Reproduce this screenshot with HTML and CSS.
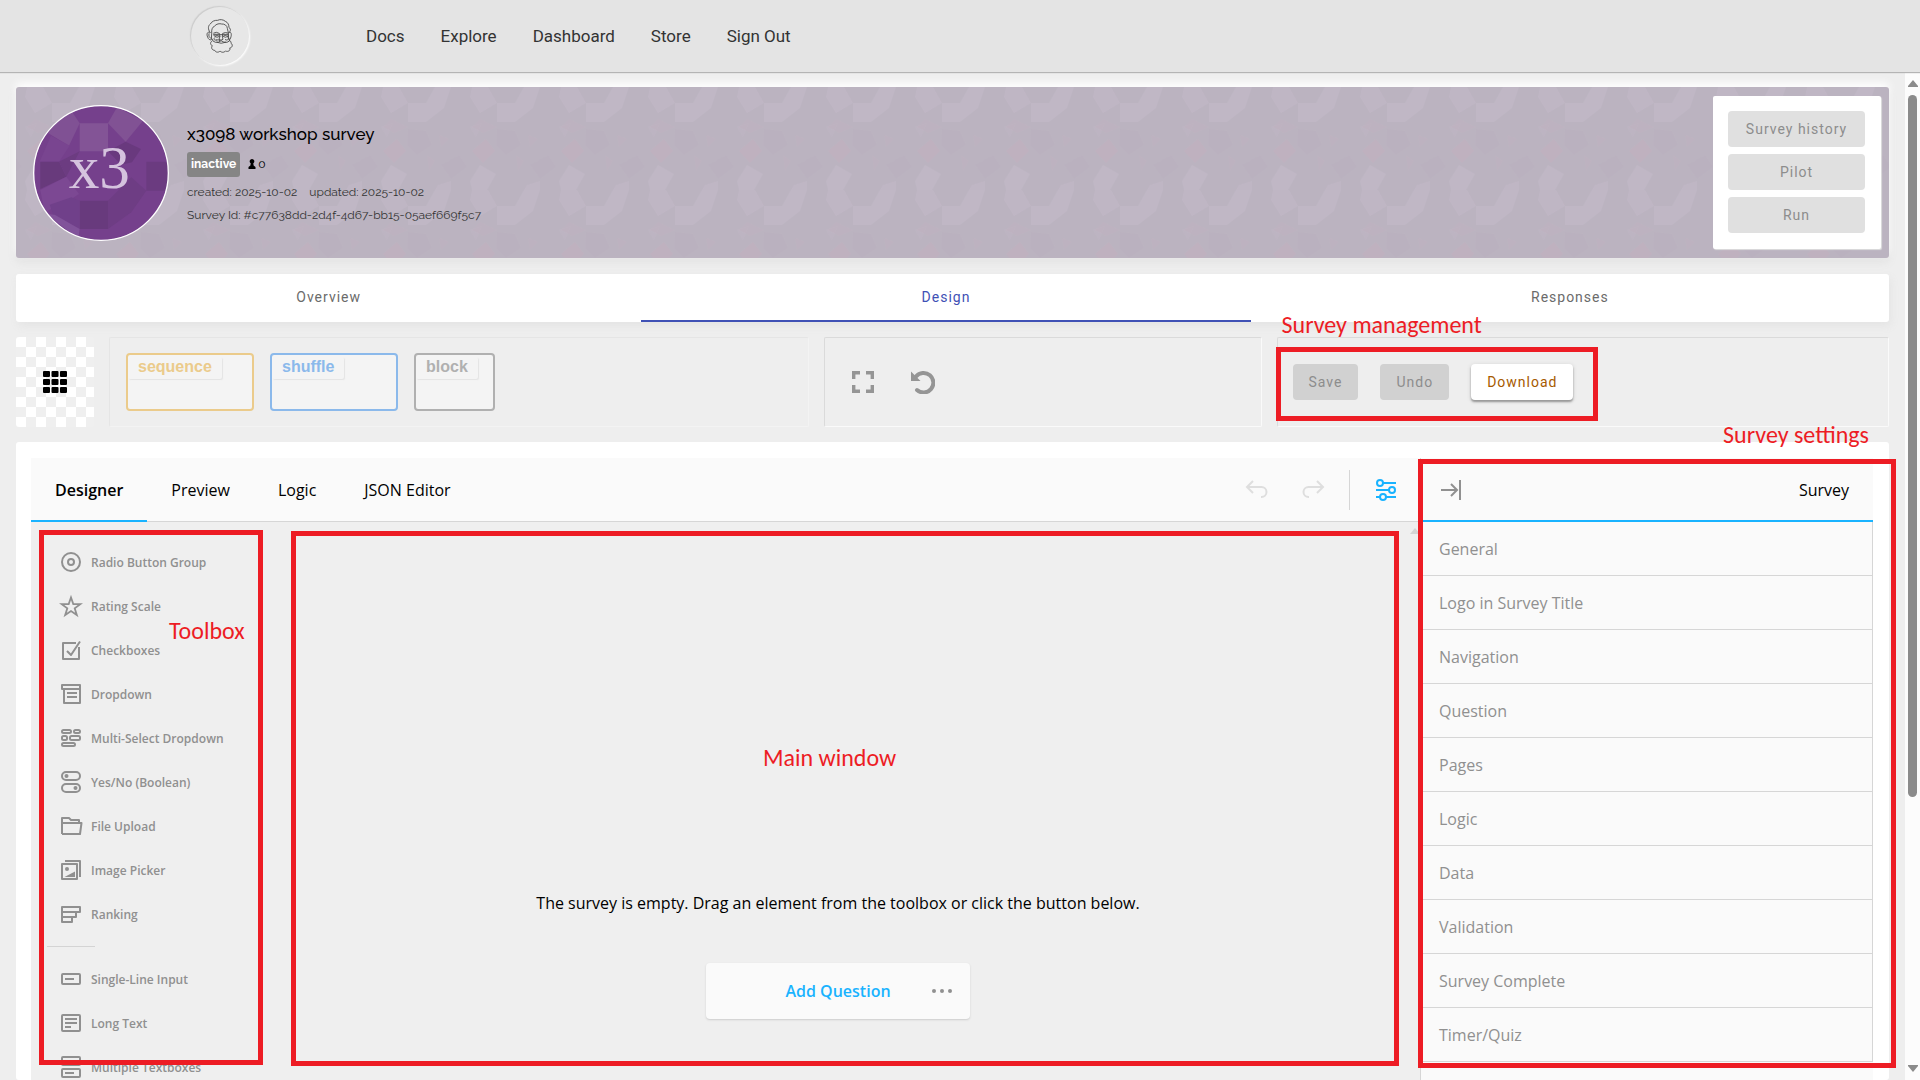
FILE: index.html
```html
<!DOCTYPE html>
<html lang="en">
<head>
<meta charset="utf-8">
<meta name="viewport" content="width=device-width, initial-scale=1">
<title>x3098 workshop survey</title>
<link rel="stylesheet" href="styles.css">
</head>
<body>
<header class="site-header">
  <a class="logo" href="#" aria-label="Home">
    <svg viewBox="34 20 174 174" fill="none" stroke="#444" stroke-width="2.6" stroke-linejoin="round" stroke-linecap="round">
      <path d="M91 96 C84 86 85 76 92 71 C96 63 106 59 114 60 C120 56 132 58 137 63 C145 66 148 74 148 82 C155 86 152 92 149 96"/>
      <path d="M96 98 C95 88 98 80 104 78 C110 70 120 69 126 71 C134 70 143 76 143 84 L146 97"/>
      <path d="M91 96 C82 92 80 103 84 110 C86 117 91 120 95 118 L96 100 M88 100 C86 106 89 112 92 113"/>
      <path d="M149 96 C155 93 156 103 154 109 C153 116 149 118 147 117 L146 98"/>
      <path d="M102 98 Q110 93 119 99 M129 99 Q138 94 145 98 M103 102 H120 V108 Q112 114 105 108 Z M129 102 H145 V108 Q137 114 130 108 Z M120 103 H129 M108 105 H116 M133 105 H140" />
      <path d="M121 108 L118 117 Q124 122 130 117 L128 108 M105 112 C100 116 104 121 110 119 M110 119 Q116 116 121 121 M145 112 C150 117 142 122 137 118"/>
      <path d="M97 116 Q99 125 108 126 Q118 127 124 121 Q132 127 142 126 Q151 124 151 116 M112 126 Q124 132 138 126"/>
      <path d="M97 122 C90 126 92 134 98 136 C93 143 98 150 105 150 C109 158 118 156 121 152 C127 158 134 156 137 152 C147 156 153 149 150 143 C159 142 160 132 154 129 C155 124 152 121 150 121"/>
    </svg>
  </a>
  <nav class="site-nav" aria-label="Main">
    <a href="#">Docs</a>
    <a href="#">Explore</a>
    <a href="#">Dashboard</a>
    <a href="#">Store</a>
    <a href="#">Sign Out</a>
  </nav>
</header>

<div class="viewport">
  <main class="page">
    <section class="hero">
      <svg class="hero-pattern" aria-hidden="true">
        <defs>
          <pattern id="gem" x="9" y="0" width="89" height="103" patternUnits="userSpaceOnUse">
            <g fill="#c0b7c5">
              <path d="M2 0 H18 L27 16 L10 26 L0 10 Z" opacity=".8"/>
              <path d="M27 16 H45 V35 H27 Z"/>
              <path d="M45 16 L54 0 H70 L63 21 L45 35 Z"/>
              <path d="M10 78 L26 87 L17 103 H2 L0 94 Z"/>
              <path d="M54 103 L57 98 L70 94 V103 Z" opacity=".8"/>
              <path d="M0 40 L12 36 L6 50 Z" opacity=".4"/>
            </g>
            <g fill="#b9b0be">
              <path d="M27 42 L45 44 L51 58 L36 68 L26 58 Z" opacity=".5"/>
              <path d="M60 78 L78 68 L86 80 L70 92 Z" opacity=".4"/>
            </g>
            <g fill="#bfb1bf">
              <path d="M2 64 L16 52 L25 64 L13 76 Z"/>
              <path d="M10 32 L27 40 L13 46 L2 40 Z" opacity=".5"/>
              <path d="M46 68 L54 74 L48 84 Z" opacity=".5"/>
              <path d="M58 48 L68 52 L60 60 Z" opacity=".5"/>
            </g>
          </pattern>
        </defs>
        <rect width="100%" height="100%" fill="url(#gem)"/>
      </svg>
      <svg class="avatar" viewBox="50 73 408 408" role="img" aria-label="x3">
        <defs><clipPath id="disc"><circle cx="254" cy="277" r="202"/></clipPath></defs>
        <g clip-path="url(#disc)">
          <rect x="50" y="73" width="408" height="408" fill="#75408c"/>
          <path d="M165 90 L190 128 L158 195 L95 157 L140 100Z" fill="#805194"/>
          <path d="M190 128 H275 V212 H190Z" fill="#835496"/>
          <path d="M302 80 L380 120 L328 183 L275 128Z" fill="#815294"/>
          <path d="M104 165 L160 195 L128 243 H70Z" fill="#794590"/>
          <path d="M275 212 L328 183 L374 205 L347 245 L315 252Z" fill="#69397e"/>
          <path d="M72 243 H128 L150 288 L72 325Z" fill="#683a7c"/>
          <path d="M128 243 L190 212 L150 288Z" fill="#6c3c81"/>
          <path d="M72 328 L150 288 L188 340 L165 355 L85 395Z" fill="#7c4893"/>
          <path d="M190 360 H275 V445 H190Z" fill="#683a7d"/>
          <path d="M100 372 L165 350 L190 360 V445 L110 402Z" fill="#70408a"/>
          <path d="M90 400 L115 402 L190 445 L186 475Z" fill="#81539a"/>
          <path d="M390 243 H460 V330 H390Z" fill="#6b3b80"/>
          <path d="M275 360 L345 290 L390 330 L345 395 L275 445Z" fill="#6e3d84"/>
        </g>
        <circle cx="254" cy="277" r="202" fill="none" stroke="#fff" stroke-width="4"/>
        <text class="avatar-text" x="249" y="323" text-anchor="middle">x3</text>
      </svg>
      <div class="survey-info">
        <h1>x3098 workshop survey</h1>
        <p class="status">
          <span class="badge">inactive</span>
          <svg viewBox="0 0 8 10" width="8" height="10" aria-hidden="true"><path d="M4 0a2.300 2.300 0 0 1 1.300 4.200L5.600 6.500 7.500 8V10H.5V8L2.400 6.500 2.700 4.200A2.300 2.300 0 0 1 4 0Z"/></svg>
          <span>0</span>
        </p>
        <p class="meta"><span>created: 2025-10-02</span><span>updated: 2025-10-02</span></p>
        <p class="meta">Survey Id: #c77638dd-2d4f-4d67-bb15-05aef669f5c7</p>
      </div>
      <div class="run-panel">
        <button class="btn" type="button" disabled>Survey history</button>
        <button class="btn" type="button" disabled>Pilot</button>
        <button class="btn" type="button" disabled>Run</button>
      </div>
    </section>

    <nav class="page-tabs" aria-label="Survey">
      <a href="#">Overview</a>
      <a class="active" href="#" aria-current="page">Design</a>
      <a href="#">Responses</a>
    </nav>

    <section class="toolbar">
      <button class="grid-toggle" type="button" aria-label="Grid">
        <svg viewBox="0 0 24 22" width="24" height="22"><path d="M1 0h5a1 1 0 0 1 1 1v4a1 1 0 0 1-1 1H1a1 1 0 0 1-1-1V1a1 1 0 0 1 1-1ZM9.500 0h5a1 1 0 0 1 1 1v4a1 1 0 0 1-1 1h-5a1 1 0 0 1-1-1V1a1 1 0 0 1 1-1ZM18 0h5a1 1 0 0 1 1 1v4a1 1 0 0 1-1 1h-5a1 1 0 0 1-1-1V1a1 1 0 0 1 1-1ZM1 8h5a1 1 0 0 1 1 1v4a1 1 0 0 1-1 1H1a1 1 0 0 1-1-1V9a1 1 0 0 1 1-1ZM9.500 8h5a1 1 0 0 1 1 1v4a1 1 0 0 1-1 1h-5a1 1 0 0 1-1-1V9a1 1 0 0 1 1-1ZM18 8h5a1 1 0 0 1 1 1v4a1 1 0 0 1-1 1h-5a1 1 0 0 1-1-1V9a1 1 0 0 1 1-1ZM1 16h5a1 1 0 0 1 1 1v4a1 1 0 0 1-1 1H1a1 1 0 0 1-1-1v-4a1 1 0 0 1 1-1ZM9.500 16h5a1 1 0 0 1 1 1v4a1 1 0 0 1-1 1h-5a1 1 0 0 1-1-1v-4a1 1 0 0 1 1-1ZM18 16h5a1 1 0 0 1 1 1v4a1 1 0 0 1-1 1h-5a1 1 0 0 1-1-1v-4a1 1 0 0 1 1-1Z"/></svg>
      </button>
      <div class="well well-faint">
        <div class="node node-sequence"><span>sequence</span></div>
        <div class="node node-shuffle"><span>shuffle</span></div>
        <div class="node node-block"><span>block</span></div>
      </div>
      <div class="well well-view">
        <button class="icon-btn" type="button" aria-label="Full screen">
          <svg viewBox="0 0 22 22" width="22" height="22" fill="none" stroke="#959595" stroke-width="3.400"><path d="M1.700 8V1.700H8M14 1.700h6.300V8M20.300 14v6.300H14M8 20.300H1.700V14"/></svg>
        </button>
        <button class="icon-btn" type="button" aria-label="Reset">
          <svg viewBox="0 0 24 24" width="24" height="24"><path d="M5 6.500A9.800 9.800 0 1 1 6 20" fill="none" stroke="#959595" stroke-width="4" stroke-linecap="round"/><path d="M0 1.500V11H9.500Z" fill="#959595"/></svg>
        </button>
      </div>
      <div class="well well-actions">
        <button class="btn btn-muted" type="button" disabled>Save</button>
        <button class="btn btn-muted" type="button" disabled>Undo</button>
        <button class="btn btn-raised" type="button">Download</button>
        <div class="mark mark-management"></div>
        <span class="note note-management">Survey management</span>
      </div>
    </section>

    <section class="creator">
      <div class="workspace">
        <div class="creator-bar">
          <nav class="creator-tabs" aria-label="Creator">
            <a class="active" href="#" aria-current="page">Designer</a>
            <a href="#">Preview</a>
            <a href="#">Logic</a>
            <a href="#">JSON Editor</a>
          </nav>
          <div class="creator-actions">
            <button class="icon-btn" type="button" aria-label="Undo" disabled>
              <svg viewBox="0 0 24 24" width="24" height="24" fill="none" stroke="#dedede" stroke-width="2"><path d="M8 3L2 9l6 6M2 9h14.500a5 5 0 0 1 0 10H16"/></svg>
            </button>
            <button class="icon-btn" type="button" aria-label="Redo" disabled>
              <svg viewBox="0 0 24 24" width="24" height="24" fill="none" stroke="#dedede" stroke-width="2"><path d="M16 3l6 6-6 6M22 9H7.500a5 5 0 0 0 0 10H8"/></svg>
            </button>
            <span class="divider"></span>
            <button class="icon-btn" type="button" aria-label="Settings">
              <svg viewBox="0 0 24 24" width="24" height="24" fill="none" stroke="#19b3ff" stroke-width="2"><circle cx="6" cy="5" r="3"/><path d="M9 5h13M2 12h13"/><circle cx="18" cy="12" r="3"/><path d="M2 19h4M12 19h10"/><circle cx="9" cy="19" r="3"/></svg>
            </button>
          </div>
        </div>
        <div class="work-body">
          <aside class="toolbox">
            <ul>
              <li><button type="button"><svg viewBox="0 0 24 24"><circle cx="12" cy="12" r="9"/><circle cx="12" cy="12" r="3"/></svg>Radio Button Group</button></li>
              <li><button type="button"><svg viewBox="0 0 24 24"><path d="M12 3.500l2.300 6.600h7l-5.600 4.200 2.100 6.800L12 17l-5.800 4.100 2.100-6.800L2.700 10.100h7Z" stroke-width="1.800" stroke-linejoin="miter"/></svg>Rating Scale</button></li>
              <li><button type="button"><svg viewBox="0 0 24 24"><path d="M17 5H4v16h16V9M8 13l4 4L21 3.500"/></svg>Checkboxes</button></li>
              <li><button type="button"><svg viewBox="0 0 24 24"><path d="M3 3h18v4H3ZM5 7v14h16V7M8 11h10M8 15h10"/></svg>Dropdown</button></li>
              <li><button type="button"><svg viewBox="0 0 24 24"><rect x="3" y="4" width="9" height="3" rx="1.500"/><rect x="15" y="4" width="6" height="3" rx="1.500"/><rect x="3" y="10" width="5" height="4" rx="1.500"/><rect x="11" y="10" width="10" height="4" rx="1.500"/><rect x="3" y="17" width="13" height="3" rx="1.500"/></svg>Multi-Select Dropdown</button></li>
              <li><button type="button"><svg viewBox="0 0 24 24"><rect x="3" y="2" width="18" height="8" rx="4"/><rect x="3" y="14" width="18" height="8" rx="4"/><circle class="dot" cx="7.500" cy="6" r="2"/><circle class="dot" cx="16.500" cy="18" r="2"/></svg>Yes/No (Boolean)</button></li>
              <li><button type="button"><svg viewBox="0 0 24 24"><path d="M3 20V4h7l2 2h8v3M3 20h18l1.500-11H3"/></svg>File Upload</button></li>
              <li><button type="button"><svg viewBox="0 0 24 24"><path d="M6 3h15v16M3 6h15v15H3Z"/><circle class="dot" cx="8" cy="11" r="2"/><path class="dot" d="M5.500 19L16 13.500V19Z"/></svg>Image Picker</button></li>
              <li><button type="button"><svg viewBox="0 0 24 24"><path d="M3 5h18v5H3ZM3 10h14v5H3ZM3 15h10v5H3Z"/></svg>Ranking</button></li>
              <li class="separator" role="separator"></li>
              <li><button type="button"><svg viewBox="0 0 24 24"><rect x="3" y="7" width="18" height="10" rx="1"/><path d="M6 12h9"/></svg>Single-Line Input</button></li>
              <li><button type="button"><svg viewBox="0 0 24 24"><rect x="3" y="4" width="18" height="16" rx="1"/><path d="M6 8h12M6 12h12M6 16h6"/></svg>Long Text</button></li>
              <li><button type="button"><svg viewBox="0 0 24 24"><rect x="3" y="2" width="18" height="8" rx="1"/><rect x="3" y="14" width="18" height="8" rx="1"/><path d="M6 6h9M6 18h9"/></svg>Multiple Textboxes</button></li>
            </ul>
            <div class="mark mark-toolbox"></div>
            <span class="note note-toolbox">Toolbox</span>
          </aside>
          <div class="canvas">
            <p>The survey is empty. Drag an element from the toolbox or click the button below.</p>
            <div class="add-question">
              <button class="add-main" type="button">Add Question</button>
              <button class="add-more" type="button" aria-label="Question type"><svg viewBox="0 0 20 4" width="20" height="4" fill="#909090"><circle cx="2" cy="2" r="2"/><circle cx="10" cy="2" r="2"/><circle cx="18" cy="2" r="2"/></svg></button>
            </div>
            <svg class="canvas-arrow" viewBox="0 0 10 6" width="10" height="6" fill="#d4d4d4" aria-hidden="true"><path d="M5 0L10 6H0Z"/></svg>
            <div class="mark mark-canvas"></div>
            <span class="note note-canvas">Main window</span>
          </div>
        </div>
      </div>
      <aside class="settings">
        <div class="settings-head">
          <button class="icon-btn" type="button" aria-label="Collapse">
            <svg viewBox="0 0 24 24" width="24" height="24" fill="none" stroke="#909090" stroke-width="2"><path d="M2 12h16M12 6l6 6-6 6M21 2v20"/></svg>
          </button>
          <h2>Survey</h2>
        </div>
        <ul>
          <li><a href="#">General</a></li>
          <li><a href="#">Logo in Survey Title</a></li>
          <li><a href="#">Navigation</a></li>
          <li><a href="#">Question</a></li>
          <li><a href="#">Pages</a></li>
          <li><a href="#">Logic</a></li>
          <li><a href="#">Data</a></li>
          <li><a href="#">Validation</a></li>
          <li><a href="#">Survey Complete</a></li>
          <li><a href="#">Timer/Quiz</a></li>
        </ul>
        <div class="mark mark-settings"></div>
        <span class="note note-settings">Survey settings</span>
      </aside>
    </section>
  </main>
  <div class="scrollbar" aria-hidden="true">
    <svg viewBox="0 0 10 7" width="10" height="7" fill="#8b8b8b"><path d="M5 0L10 6V7H0V6Z"/></svg>
    <div class="track"><div class="thumb"></div></div>
    <svg viewBox="0 0 10 7" width="10" height="7" fill="#8b8b8b"><path d="M5 7L0 1V0H10V1Z"/></svg>
  </div>
</div>
</body>
</html>
```
FILE: styles.css
```css
* { box-sizing: border-box; }

body {
  margin: 0;
  height: 100vh;
  display: flex;
  flex-direction: column;
  overflow: hidden;
  background: #eee;
  font-family: Roboto, "Liberation Sans", sans-serif;
  color: #000;
}

h1, h2, p, ul { margin: 0; padding: 0; font-weight: 400; }
ul { list-style: none; }
a { color: inherit; text-decoration: none; }
button { font: inherit; border: 0; padding: 0; background: none; }
svg { display: block; }

/* Site header */
.site-header {
  flex: none;
  display: flex;
  align-items: center;
  gap: 117px;
  height: 72px;
  padding-left: 191px;
  background: #e4e4e4;
  box-shadow: 0 1px 1px #b4b4b4;
  z-index: 1;
}
.logo {
  width: 58px;
  height: 58px;
  border-radius: 50%;
  background: #e7e7e7;
  box-shadow: -1px -1px 1px #ccc, 1px 1px 2px #fff;
}
.site-nav { display: flex; gap: 36px; font-size: 17px; color: #333; }

.viewport { flex: 1; min-height: 0; display: flex; }
.page {
  flex: 1;
  min-width: 0;
  display: flex;
  flex-direction: column;
  gap: 15px;
  padding: 15px 16px 0;
  overflow: hidden;
}

/* Scroll bar */
.scrollbar {
  width: 15px;
  display: flex;
  flex-direction: column;
  align-items: center;
  gap: 8px;
  padding: 8px 0;
  background: #fcfcfc;
}
.track { flex: 1; width: 9px; }
.thumb { height: 73%; border-radius: 5px; background: #8b8b8b; }

/* Survey summary */
.hero {
  position: relative;
  flex: none;
  display: flex;
  align-items: center;
  gap: 18px;
  margin-bottom: 1px;
  padding: 9px 8px 9px 17px;
  background: #bbb3c0;
  border-radius: 3px;
  box-shadow: 0 -4px 8px #fff, 0 4px 8px #e2e2e2;
}
.hero-pattern { position: absolute; inset: 0; width: 100%; height: 100%; }
.avatar { position: relative; flex: none; width: 136px; height: 136px; }
.avatar-text { font: 184px "Liberation Serif", serif; fill: #d5c3de; }
.survey-info { position: relative; flex: 1; padding-top: 4px; font-family: Raleway, Lato, sans-serif; }
.survey-info h1 { font-size: 17px; line-height: 22px; font-weight: 500; }
.status { display: flex; align-items: center; gap: 2px; margin: 7px 0 4px; font-size: 12px; line-height: 25px; }
.badge { margin-right: 6px; padding: 0 4px; border-radius: 3px; background: #858585; color: #fff; font-weight: 700; }
.meta { display: flex; gap: 12px; font-size: 12px; line-height: 23px; color: #333; }
.run-panel {
  position: relative;
  display: flex;
  flex-direction: column;
  gap: 7px;
  width: 168px;
  padding: 15px 16px 16px 15px;
  background: #fff;
  border-radius: 2px;
  box-shadow: 1px 1px 1px #ddd;
}

.btn {
  height: 36px;
  padding: 0 16px;
  border-radius: 4px;
  background: #e0e0e0;
  color: #8d8d8d;
  font-size: 14px;
  letter-spacing: 1px;
  white-space: nowrap;
}
.btn-muted { background: #d1d1d1; }
.btn-raised { background: #fff; color: #a65a00; box-shadow: 0 2px 2px #999, 0 1px 4px #ccc; }

/* Page tabs */
.page-tabs {
  flex: none;
  display: flex;
  background: #fff;
  border-radius: 3px;
  box-shadow: 2px 4px 8px #e4e4e4;
  font-size: 14px;
  letter-spacing: 1px;
  color: #6b6b6b;
  text-align: center;
}
.page-tabs a { flex: 1 1 auto; line-height: 46px; border-bottom: 2px solid transparent; }
.page-tabs .active { color: #3f51b5; border-color: #3f51b5; }

/* Toolbar */
.toolbar {
  flex: none;
  display: grid;
  grid-template-columns: 78px 40fr 25fr 35fr;
  gap: 15px;
}
.grid-toggle {
  display: grid;
  place-items: center;
  height: 90px;
  border-radius: 3px;
  background: conic-gradient(#efefef 25%, #fff 0 50%, #efefef 0 75%, #fff 0) 0 0 / 20px 20px;
}
.well {
  position: relative;
  display: flex;
  align-items: center;
  padding: 0 12px 0 14px;
  border: 1px solid;
  border-color: #dadada #fafafa #fafafa #dadada;
  border-radius: 2px;
}
.well-faint { gap: 16px; border-color: #e5e5e5 #f3f3f3 #f3f3f3 #e5e5e5; padding-left: 16px; }
.well-view { gap: 37px; padding-left: 27px; }
.well-actions { gap: 22px; padding-left: 15px; }
.node {
  width: 128px;
  height: 58px;
  border: 2px solid;
  border-radius: 4px;
  background: #f4f4f4;
  font: 700 16px/24px "Liberation Sans", sans-serif;
}
.node span {
  display: inline-block;
  height: 22px;
  padding: 0 10px;
  line-height: 20px;
  border-radius: 2px;
  box-shadow: 1px 1px 1px #e4e4e4;
}
.node-sequence { color: #ebcb8b; }
.node-shuffle { color: #8bb9eb; }
.node-block { width: 81px; color: #b0b0b0; }

/* Survey creator */
.creator {
  flex: 1;
  min-height: 0;
  display: flex;
  padding: 16px 16px 0 15px;
  background: #fff;
  border-radius: 3px;
  font-family: "Open Sans", "Noto Sans", sans-serif;
  font-size: 16px;
}
.workspace { flex: 1; min-width: 0; display: flex; flex-direction: column; background: #efefef; }
.creator-bar {
  flex: none;
  display: flex;
  justify-content: space-between;
  height: 64px;
  background: #fafafa;
  box-shadow: inset 0 -1px #d6d6d6;
}
.creator-tabs { display: flex; }
.creator-tabs a { padding: 0 24px; line-height: 64px; }
.creator-tabs .active { font-weight: 600; box-shadow: inset 0 -2px #19b3ff; }
.creator-actions { display: flex; align-items: center; gap: 24px; padding-right: 22px; }
.creator-actions .icon-btn:nth-child(2) { margin-left: 8px; }
.divider { width: 1px; height: 40px; background: #d6d6d6; }
.work-body { flex: 1; min-height: 0; display: flex; }

.toolbox { position: relative; width: 225px; padding: 18px 0 0 16px; }
.toolbox ul { height: 100%; overflow: hidden; }
.toolbox button {
  display: flex;
  align-items: center;
  gap: 8px;
  height: 44px;
  padding-left: 12px;
  font-size: 12px;
  font-weight: 600;
  color: #909090;
}
.toolbox svg { width: 24px; height: 24px; fill: none; stroke: #909090; stroke-width: 2; stroke-linejoin: round; }
.toolbox .dot { fill: #909090; stroke: none; }
.separator { width: 48px; height: 1px; margin: 10px 0; background: #d4d4d4; }

.canvas {
  position: relative;
  flex: 1;
  display: flex;
  flex-direction: column;
  align-items: center;
  justify-content: flex-end;
  gap: 49px;
  padding-bottom: 61px;
}
.add-question {
  display: flex;
  align-items: center;
  width: 264px;
  height: 56px;
  padding: 0 18px 0 56px;
  background: #fafafa;
  border-radius: 4px;
  box-shadow: 0 1px 2px #ccc;
}
.add-main { flex: 1; font-weight: 600; color: #19b3ff; }
.add-more { width: 38px; height: 24px; display: flex; align-items: center; justify-content: flex-end; }
.canvas-arrow { position: absolute; top: 6px; right: 0; }

.settings { position: relative; width: 453px; background: #fafafa; border-left: 1px solid #d6d6d6; }
.settings-head {
  display: flex;
  align-items: center;
  justify-content: space-between;
  height: 64px;
  padding: 2px 24px 0 18px;
  border-bottom: 2px solid #19b3ff;
}
.settings h2 { font-size: 16px; }
.settings a {
  display: block;
  padding: 2px 0 0 18px;
  line-height: 51px;
  border: solid #d6d6d6;
  border-width: 0 1px 1px 0;
  color: #909090;
}

/* Callouts */
.mark { position: absolute; border: 5px solid #ed1c24; pointer-events: none; }
.note { position: absolute; color: #ed1c24; font: 24px/28px Carlito, Lato, sans-serif; white-space: nowrap; }
.mark-management { left: -2px; top: 9px; width: 322px; height: 74px; }
.note-management { left: 4px; top: -27px; }
.mark-toolbox { left: 8px; right: -7px; top: 8px; bottom: 15px; }
.note-toolbox { left: 138px; top: 95px; }
.mark-canvas { left: 35px; right: 21px; top: 9px; bottom: 14px; }
.note-canvas { left: 507px; top: 222px; }
.mark-settings { left: -3px; right: -23px; top: 1px; bottom: 12px; }
.note-settings { right: 4px; top: -37px; }
```
